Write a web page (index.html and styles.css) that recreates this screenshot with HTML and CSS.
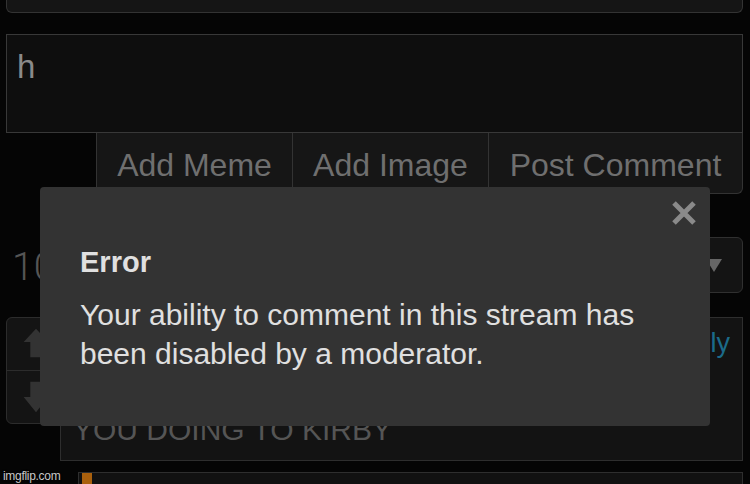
FILE: index.html
```html
<!DOCTYPE html>
<html>
<head>
<meta charset="utf-8">
<link rel="stylesheet" href="styles.css">
</head>
<body>
<div class="page">
  <div class="topbox"></div>
  <div class="textarea">h</div>
  <div class="buttons">
    <div class="btn">Add Meme</div>
    <div class="btn">Add Image</div>
    <div class="btn last">Post Comment</div>
  </div>
  <div class="sortrow">
    <div class="count">10</div>
    <div class="dropdown"><span class="tri"></span></div>
  </div>
  <div class="comment">
    <div class="votes">
      <div class="vote up">
        <svg width="40" height="40" viewBox="0 0 40 40"><path d="M7 18 L20 4 L33 18 L26 18 L26 34 L14 34 L14 18 Z" fill="#333"/></svg>
      </div>
      <div class="vote down">
        <svg width="40" height="40" viewBox="0 0 40 40"><path d="M14 4 L26 4 L26 20 L33 20 L20 36 L7 20 L14 20 Z" fill="#333"/></svg>
      </div>
    </div>
    <div class="cbody">
      <div class="chead"><span class="reply">Reply</span></div>
      <div class="ctext">YOU DOING TO KIRBY</div>
    </div>
  </div>
  <div class="nextbox"><span class="orange"></span></div>
</div>
<div class="watermark">imgflip.com</div>
<div class="modal">
  <div class="close">
    <svg width="26" height="26" viewBox="0 0 26 26"><path d="M3 3 L23 23 M23 3 L3 23" stroke="#8a8a8a" stroke-width="5" stroke-linecap="butt"/></svg>
  </div>
  <div class="mtitle">Error</div>
  <div class="mtext">Your ability to comment in this stream has been disabled by a moderator.</div>
</div>
</body>
</html>
```
FILE: styles.css
```css
html, body {
  margin: 0;
  padding: 0;
  background: #050505;
  width: 750px;
  height: 484px;
  overflow: hidden;
  font-family: "Liberation Sans", Arial, sans-serif;
}
.page {
  display: flex;
  flex-direction: column;
}
.topbox {
  margin: 0 7px 0 6px;
  height: 12px;
  background: #151515;
  border: 1px solid #333;
  border-top: none;
  border-radius: 0 0 6px 6px;
}
.textarea {
  margin: 21px 7px 0 6px;
  height: 97px;
  background: #0e0e0e;
  border: 1px solid #383838;
  color: #8a8a8a;
  font-size: 33px;
  padding: 0 0 0 10px;
  line-height: 64px;
  box-sizing: content-box;
}
.buttons {
  display: flex;
  margin: 0 7px 0 96px;
  height: 61px;
}
.btn {
  flex: 0 0 auto;
  width: 196px;
  background: #161616;
  border-left: 1px solid #333;
  border-bottom: 1px solid #333;
  color: #6f6f6f;
  font-size: 32px;
  display: flex;
  align-items: center;
  justify-content: center;
  padding-top: 4px;
  box-sizing: border-box;
  white-space: nowrap;
}
.btn.last {
  flex: 1;
  border-right: 1px solid #333;
  border-bottom-right-radius: 6px;
}
.sortrow {
  display: flex;
  justify-content: space-between;
  align-items: center;
  margin: 42px 7px 0 12px;
  height: 58px;
}
.count {
  font-family: Roboto, "Liberation Sans", sans-serif;
  font-weight: 300;
  font-size: 39px;
  color: #555;
  padding-top: 4px;
}
.dropdown {
  width: 52px;
  height: 56px;
  background: #141414;
  border: 1px solid #303030;
  border-radius: 6px;
  display: flex;
  align-items: center;
  justify-content: flex-end;
  padding-right: 20px;
  box-sizing: border-box;
}
.tri {
  width: 0;
  height: 0;
  border-left: 8px solid transparent;
  border-right: 8px solid transparent;
  border-top: 13px solid #666;
}
.comment {
  display: flex;
  margin: 23px 7px 0 6px;
  gap: 4px;
  align-items: flex-start;
}
.votes {
  width: 50px;
  height: 107px;
  border: 1px solid #2c2c2c;
  border-radius: 6px;
  background: #141414;
  display: flex;
  flex-direction: column;
  box-sizing: border-box;
}
.vote {
  flex: 1;
  display: flex;
  align-items: center;
  justify-content: center;
  padding-left: 10px;
}
.vote.up {
  border-bottom: 1px solid #2c2c2c;
}
.cbody {
  flex: 1;
  height: 144px;
  background: #131313;
  border: 1px solid #2e2e2e;
  box-sizing: border-box;
  display: flex;
  flex-direction: column;
}
.chead {
  height: 95px;
  display: flex;
  justify-content: flex-end;
  padding: 10px 12px 0 0;
  box-sizing: border-box;
}
.reply {
  color: #1b6b8a;
  font-size: 27px;
}
.ctext {
  color: #555;
  font-size: 30px;
  padding-left: 12px;
  white-space: nowrap;
}
.nextbox {
  margin: 11px 7px 0 78px;
  height: 30px;
  background: #111;
  border: 1px solid #2e2e2e;
  padding-left: 3px;
}
.orange {
  display: block;
  width: 10px;
  height: 30px;
  background: #a9600d;
}
.watermark {
  position: absolute;
  left: 3px;
  top: 469px;
  font-size: 12px;
  color: #c8c8c8;
  text-shadow: 0 0 2px #000;
  letter-spacing: -0.3px;
}
.modal {
  position: absolute;
  left: 40px;
  top: 187px;
  width: 670px;
  height: 239px;
  background: #333;
  border-radius: 4px;
  padding: 48px 30px 0 40px;
  box-sizing: border-box;
}
.close {
  position: absolute;
  right: 13px;
  top: 13px;
  width: 26px;
  height: 26px;
}
.close svg {
  display: block;
}
.mtitle {
  color: #e0e0e0;
  font-weight: bold;
  font-size: 29px;
  line-height: 54px;
}
.mtext {
  color: #e0e0e0;
  font-size: 30px;
  line-height: 39px;
  margin-top: 6px;
}
```
